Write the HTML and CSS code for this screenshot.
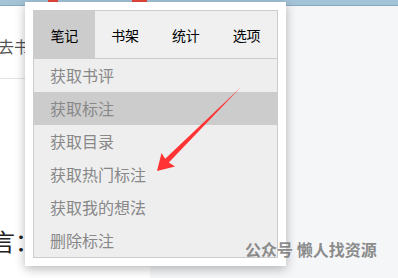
FILE: index.html
```html
<!DOCTYPE html>
<html lang="zh">
<head>
<meta charset="utf-8">
<link rel="stylesheet" href="styles.css">
</head>
<body>
<div class="page">
  <div class="topbar">
    <span class="mark mark-a"></span>
    <span class="mark mark-b"></span>
  </div>
  <div class="main">
    <div class="left">
      <div class="heading">去书</div>
      <div class="rule"></div>
      <div class="quote">言：</div>
    </div>
    <div class="right"></div>
  </div>
</div>

<div class="popup">
  <div class="panel">
    <div class="tabs">
      <div class="tab active">笔记</div>
      <div class="tab">书架</div>
      <div class="tab">统计</div>
      <div class="tab">选项</div>
    </div>
    <div class="items">
      <div class="item">获取书评</div>
      <div class="item selected">获取标注</div>
      <div class="item">获取目录</div>
      <div class="item">获取热门标注</div>
      <div class="item">获取我的想法</div>
      <div class="item">删除标注</div>
    </div>
  </div>
</div>

<svg class="arrow" width="398" height="278" viewBox="0 0 398 278">
  <polygon points="241,87 168.8,162.6 175,166.5 157,171 161.5,153 165.2,158.8" fill="#ff3333"/>
</svg>

<div class="watermark">公众号 懒人找资源</div>
</body>
</html>
```

FILE: styles.css
```css
html, body {
  margin: 0;
  padding: 0;
}
body {
  width: 398px;
  height: 278px;
  overflow: hidden;
  position: relative;
  font-family: "Noto Sans CJK SC", "Noto Sans", sans-serif;
  background: #ffffff;
}
.page {
  display: flex;
  flex-direction: column;
  height: 278px;
}
.topbar {
  height: 5px;
  background: #a3c3d7;
  border-bottom: 1px solid #8aa9bd;
  position: relative;
}
.mark {
  position: absolute;
  top: 0;
  height: 2px;
  background: #e8453c;
}
.mark-a { left: 48px; width: 10px; }
.mark-b { left: 132px; width: 15px; }
.main {
  flex: 1;
  display: flex;
}
.left {
  width: 150px;
  background: #ffffff;
  display: flex;
  flex-direction: column;
}
.heading {
  margin: 30px 0 0 -2px;
  font-size: 16px;
  line-height: 20px;
  color: #555555;
}
.rule {
  margin-top: 22px;
  height: 1px;
  background: #e3e3e3;
}
.quote {
  margin: 147px 0 0 -9px;
  font-size: 24px;
  line-height: 30px;
  color: #222222;
  white-space: nowrap;
}
.right {
  flex: 1;
  background: #f5f6f8;
}
.popup {
  position: absolute;
  left: 25px;
  top: 2px;
  padding: 8px;
  background: #ffffff;
  box-shadow: 0 3px 10px rgba(0, 0, 0, 0.28);
}
.panel {
  width: 243px;
  border: 1px solid #cccccc;
  background: #eeeeee;
}
.tabs {
  display: flex;
  height: 47px;
  background: #f0f0f0;
  border-bottom: 1px solid #cccccc;
}
.tab {
  flex: 1;
  display: flex;
  align-items: center;
  justify-content: center;
  font-size: 14px;
  color: #000000;
}
.tab.active {
  background: #cccccc;
}
.items {
  display: flex;
  flex-direction: column;
}
.item {
  height: 33px;
  line-height: 33px;
  padding-left: 16px;
  font-size: 16px;
  color: #888888;
}
.item.selected {
  background: #cccccc;
}
.arrow {
  position: absolute;
  left: 0;
  top: 0;
}
.watermark {
  position: absolute;
  left: 245px;
  top: 239px;
  font-size: 16px;
  line-height: 20px;
  font-weight: bold;
  color: rgba(110, 110, 110, 0.8);
  white-space: nowrap;
}
```
